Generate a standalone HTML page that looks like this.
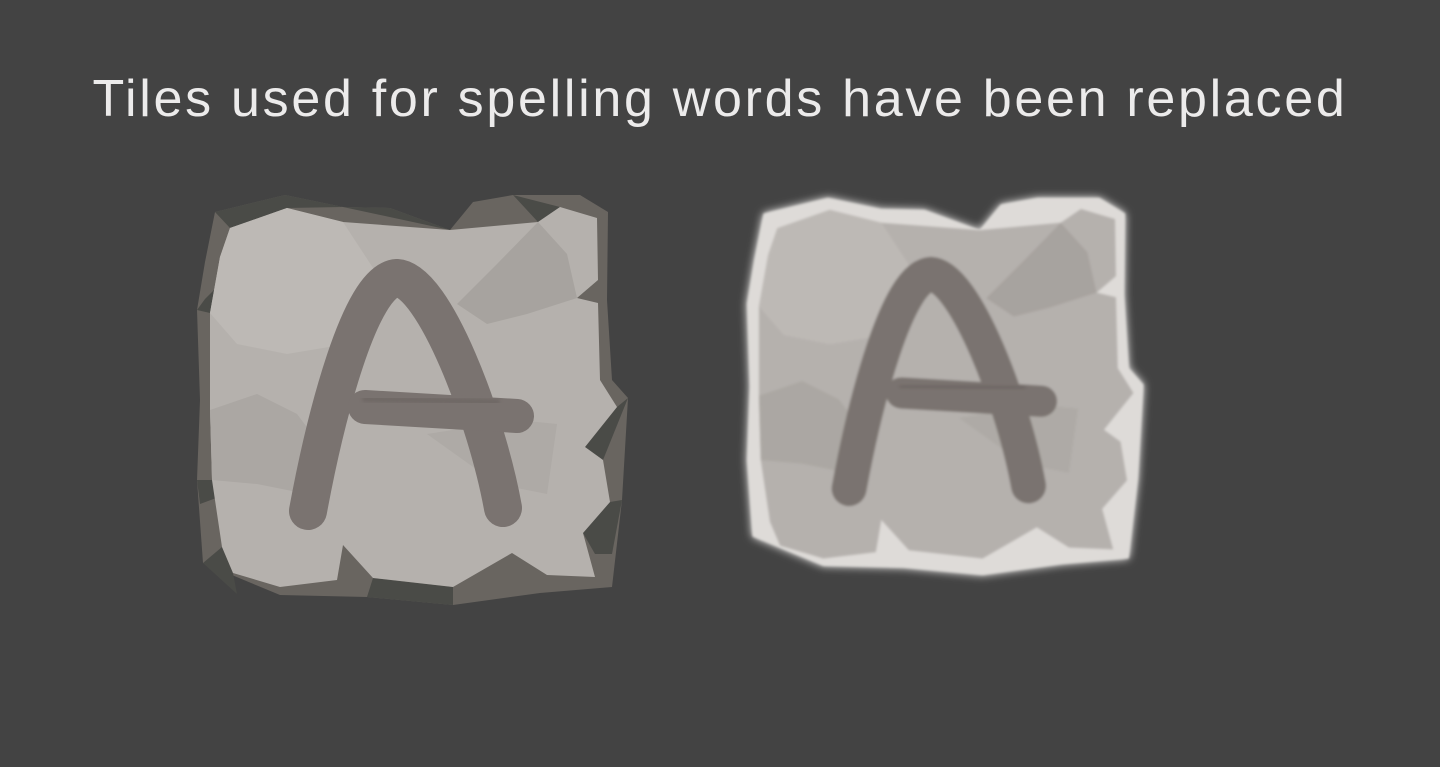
<!DOCTYPE html>
<html><head><meta charset="utf-8"><style>
html,body{margin:0;padding:0;background:#434343;width:1440px;height:767px;overflow:hidden}
h1{position:absolute;top:66px;left:0;width:1440px;text-align:center;margin:0;font:52px "Liberation Sans",sans-serif;color:#ecebeb;letter-spacing:2.7px;line-height:66px;white-space:nowrap}
svg{position:absolute;left:0;top:0}
</style></head><body>
<h1>Tiles used for spelling words have been replaced</h1>
<svg width="1440" height="767" viewBox="0 0 1440 767">
<defs>
<filter id="blur" x="-20%" y="-20%" width="140%" height="140%"><feGaussianBlur stdDeviation="5"/></filter>
<filter id="soft" x="-20%" y="-20%" width="140%" height="140%"><feGaussianBlur stdDeviation="1.5"/></filter>
<g id="face">
<polygon fill="#b5b1ad" points="33,34 90,14 146,28 253,36 341,28 363,13 400,24 401,86 380,104 401,109 403,186 420,213 388,253 406,266 413,308 386,339 398,383 350,381 315,359 256,393 176,384 146,351 140,386 83,393 36,379 25,353 15,286 13,216 13,119 23,63"/>
<polygon fill="#bdb9b5" points="33,34 90,14 146,28 180,80 150,150 90,160 40,150 13,119 23,63"/>
<polygon fill="#a7a39f" points="300,70 341,28 370,60 380,104 330,120 290,130 260,110"/>
<polygon fill="#aeaaa6" points="230,240 320,226 360,230 350,300 300,290"/>
<polygon fill="#aba7a3" points="13,216 60,200 100,220 130,260 110,300 60,290 15,286"/>
<path d="M111,317 C128,225 163,86 200,84 C237,86 290,225 306,314" fill="none" stroke="#7a7370" stroke-width="38" stroke-linecap="round" stroke-linejoin="round"/>
<path d="M168,213 L320,222" fill="none" stroke="#7a7370" stroke-width="34" stroke-linecap="round"/>
<path d="M168,205 L300,208" fill="none" stroke="#69625f" stroke-width="6" stroke-linecap="round" filter="url(#soft)" opacity=".6"/>
</g>
</defs>
<g transform="translate(197,194)">
<polygon fill="#696560" points="18,18 88,1 146,13 193,14 253,36 276,8 316,1 346,1 383,1 411,18 410,106 415,186 431,204 425,306 415,393 343,399 256,411 170,403 83,401 6,369 0,286 3,206 0,116 8,68"/>
<polygon fill="#4a4b47" points="18,18 88,1 146,13 90,14 33,34"/>
<polygon fill="#4a4b47" points="146,13 253,36 193,14"/>
<polygon fill="#4a4b47" points="316,1 363,13 341,28"/>
<polygon fill="#4a4b47" points="0,116 13,119 23,90 8,105"/>
<polygon fill="#4a4b47" points="6,369 25,353 36,379 40,400"/>
<polygon fill="#4a4b47" points="170,403 176,384 256,393 256,411"/>
<polygon fill="#4a4b47" points="386,339 413,308 425,306 415,360 398,360"/>
<polygon fill="#4a4b47" points="388,253 420,213 431,204 406,266"/>
<polygon fill="#4a4b47" points="0,286 15,286 30,300 3,310"/>
<use href="#face"/>
</g>
<g transform="translate(747,197) scale(0.92)">
<polygon fill="#f3f1ef" filter="url(#blur)" points="18,18 88,1 146,13 193,14 253,36 276,8 316,1 346,1 383,1 411,18 410,106 415,186 431,204 425,306 415,393 343,399 256,411 170,403 83,401 6,369 0,286 3,206 0,116 8,68"/>
<polygon fill="#dedbd8" filter="url(#soft)" points="18,18 88,1 146,13 193,14 253,36 276,8 316,1 346,1 383,1 411,18 410,106 415,186 431,204 425,306 415,393 343,399 256,411 170,403 83,401 6,369 0,286 3,206 0,116 8,68"/>
<g filter="url(#soft)"><use href="#face"/></g>
</g>
</svg>
</body></html>
